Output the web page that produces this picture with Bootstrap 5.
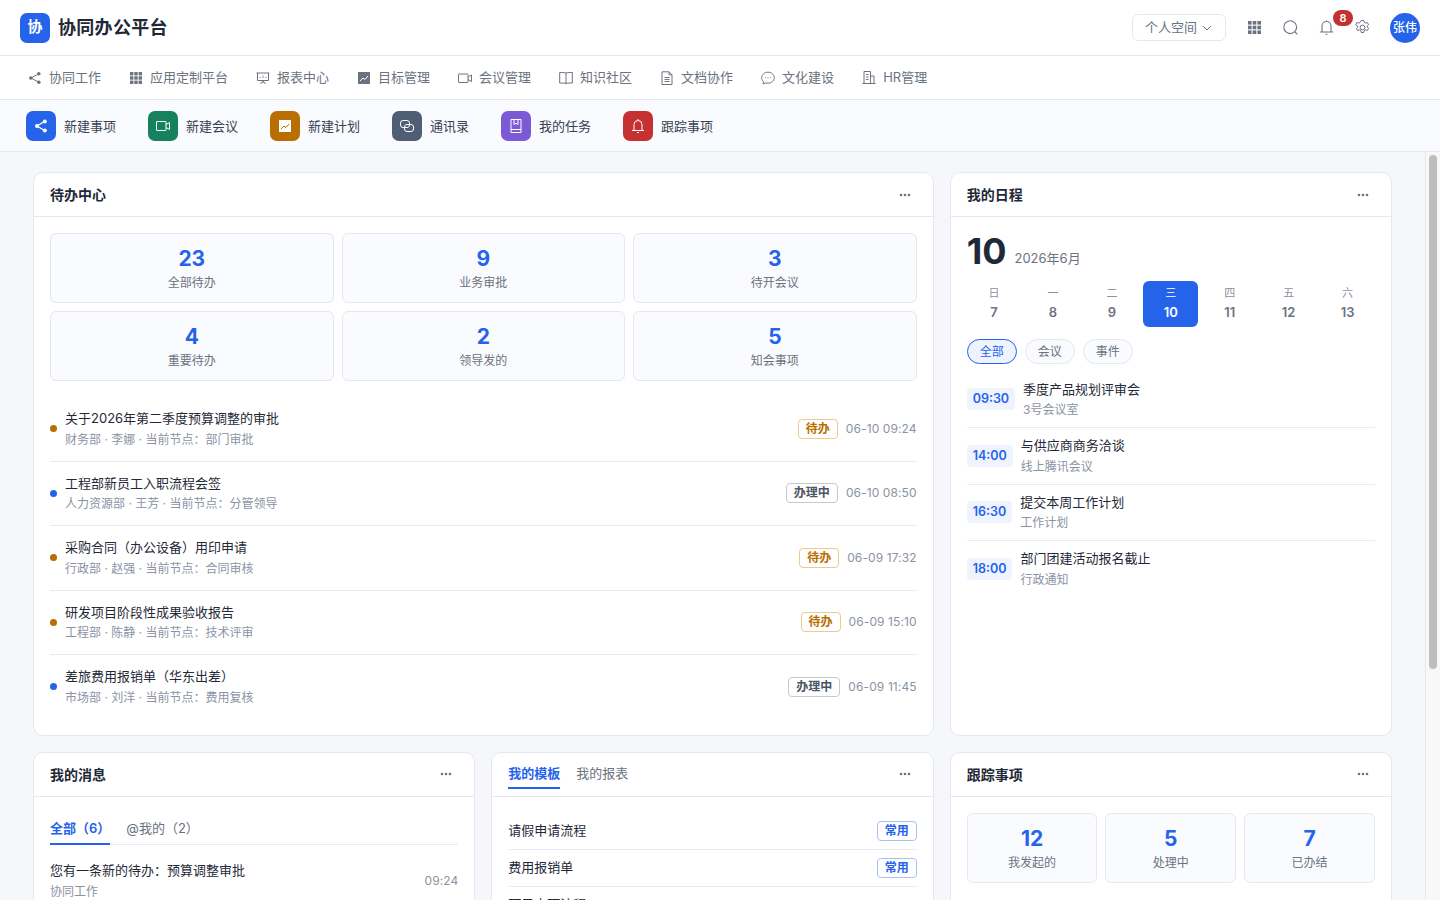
<!DOCTYPE html>
<html lang="zh-CN">
<head>
  <meta charset="UTF-8" />
  <meta name="viewport" content="width=device-width, initial-scale=1.0" />
  <title>协同办公平台</title>
  <link href="https://cdn.jsdelivr.net/npm/bootstrap@5.3.0/dist/css/bootstrap.min.css" rel="stylesheet" />
  <style>
    html, body { height: 100%; }
    body { font-family: Inter, "Noto Sans CJK SC", sans-serif; font-size: 13px; color: #1f2937; background: #f5f7fb; overflow: hidden; }
    .app-shell { height: 900px; display: flex; flex-direction: column; }
    .top-bar { height: 56px; flex: none; background: #fff; border-bottom: 1px solid #e5e8f0; padding: 0 20px; }
    .brand-logo { width: 30px; height: 30px; border-radius: 7px; background: #2563eb; color: #fff; font-size: 15px; font-weight: 700; }
    .brand-name { font-size: 18px; font-weight: 600; letter-spacing: .3px; color: #1f2937; margin-left: 8px; }
    .space-btn { width: 94px; height: 27px; padding-left: 12px; gap: 5px; border: 1px solid #e5e8f0; border-radius: 6px; color: #6b7280; background: #fff; font-size: 13px; margin-right: 21px; }
    .tool-icon { width: 15px; height: 15px; color: #6b7280; }
    .tools-row { gap: 21px; }
    .bell-wrap { position: relative; width: 15px; height: 15px; }
    .bell-count { position: absolute; left: 14px; top: -10px; width: 20px; height: 16px; border-radius: 8px; background: #c53030; color: #fff; font-size: 11px; font-weight: 600; line-height: 16px; text-align: center; }
    .gear-icon { margin-left: 21px; }
    .user-avatar { width: 30px; height: 30px; border-radius: 50%; background: #2563eb; color: #fff; font-size: 12px; font-weight: 500; margin-left: 20px; }
    .module-bar { height: 44px; flex: none; background: #fff; border-bottom: 1px solid #e5e8f0; padding-left: 14px; }
    .module-link { padding: 0 14px; color: #6b7280; display: flex; align-items: center; gap: 7px; text-decoration: none; }
    .module-link svg { width: 14px; height: 14px; flex: none; }
    .quick-bar { height: 52px; flex: none; background: #fafbfe; border-bottom: 1px solid #e5e8f0; padding-left: 26px; gap: 32px; }
    .quick-item { gap: 8px; color: #374151; }
    .quick-text { margin-top: 2px; }
    .quick-icon { width: 30px; height: 30px; border-radius: 7px; color: #fff; }
    .quick-icon svg { width: 16px; height: 16px; }
    .tone-blue { background: #2563eb; }
    .tone-green { background: #16825d; }
    .tone-amber { background: #b86e00; }
    .tone-slate { background: #4f5d75; }
    .tone-purple { background: #7c5ad6; }
    .tone-red { background: #c53030; }
    .work-area { flex: 1; min-height: 0; }
    .content-scroll { flex: 1; min-width: 0; overflow-y: auto; scrollbar-width: none; padding: 20px 33px; }
    .scroll-rail { width: 15px; flex: none; background: #f8f8f8; border-left: 1px solid #e8e8e8; padding: 3px 3px 0; }
    .scroll-thumb { height: 514px; border-radius: 4px; background: #bdbdbd; }
    .board-grid { display: grid; grid-template-columns: repeat(3, minmax(0, 1fr)); gap: 16px; }
    .span-two { grid-column: span 2; }
    .panel-card { border: 1px solid #e5e8f0; border-radius: 10px; background: #fff; }
    .panel-head { height: 44px; padding: 0 16px; border-bottom: 1px solid #e5e8f0; }
    .panel-title { font-size: 14px; font-weight: 600; color: #1f2937; }
    .more-dots { width: 24px; height: 24px; color: #6b7280; }
    .panel-body { padding: 16px; }
    .stat-grid { display: grid; gap: 8px; }
    .stat-three { grid-template-columns: repeat(3, minmax(0, 1fr)); }
    .stat-box { height: 70px; border: 1px solid #e5e8f0; border-radius: 6px; background: #fafbfe; padding-top: 12px; text-align: center; }
    .stat-num { font-size: 21px; font-weight: 700; line-height: 26px; color: #2563eb; }
    .stat-label { font-size: 12px; line-height: 18px; margin-top: 2px; color: #6b7280; }
    .todo-list { margin-top: 16px; }
    .todo-row { padding: 12px 0; gap: 8px; border-bottom: 1px solid #e8ebf2; }
    .todo-row:last-child { border-bottom: 0; }
    .todo-dot { width: 7px; height: 7px; border-radius: 50%; flex: none; }
    .row-title { font-size: 13px; line-height: 19.5px; color: #1f2937; }
    .row-sub { font-size: 12px; line-height: 18px; margin-top: 2px; color: #8b93a3; }
    .state-tag { height: 20px; padding: 0 7px; font-size: 12px; font-weight: 600; line-height: 18px; border: 1px solid; border-radius: 4px; background: #fff; white-space: nowrap; }
    .state-wait { color: #b86e00; border-color: #f0c98c; }
    .state-doing { color: #4b5563; border-color: #c5c9d2; }
    .state-common { color: #2563eb; border-color: #a9c1f7; }
    .row-time { font-size: 12px; letter-spacing: .1px; color: #8b93a3; white-space: nowrap; }
    .date-line { height: 36px; }
    .date-big { font-size: 36px; font-weight: 700; line-height: 36px; color: #1f2937; }
    .date-month { color: #6b7280; margin-left: 8px; margin-bottom: 3px; line-height: 16px; }
    .week-strip { display: grid; grid-template-columns: repeat(7, minmax(0, 1fr)); gap: 4px; margin-top: 12px; }
    .week-cell { height: 46px; padding-top: 4px; border-radius: 6px; text-align: center; }
    .week-name { font-size: 11px; line-height: 16.5px; color: #8b93a3; }
    .week-day { font-size: 13px; line-height: 19.5px; margin-top: 1px; font-weight: 600; color: #6b7280; }
    .week-today { background: #2563eb; }
    .week-today .week-name, .week-today .week-day { color: #fff; }
    .chip-row { gap: 8px; margin-top: 12px; margin-bottom: 7.5px; }
    .filter-chip { width: 50px; height: 25px; border: 1px solid #e5e8f0; border-radius: 13px; background: #fafbfe; color: #6b7280; font-size: 12px; line-height: 23px; text-align: center; }
    .chip-on { border-color: #2563eb; background: #eef3fe; color: #2563eb; }
    .sched-row { padding: 8px 0; gap: 8px; border-bottom: 1px solid #e8ebf2; }
    .sched-row:last-child { border-bottom: 0; }
    .time-tag { padding: 0 6px; height: 22px; line-height: 22px; border-radius: 4px; background: #eef3fe; color: #2563eb; font-size: 12.5px; font-weight: 600; }
    .tab-strip { gap: 16px; border-bottom: 1px solid #e8ebf2; }
    .tab-item { padding: 6px 0 5px; color: #6b7280; }
    .tab-on { color: #2563eb; font-weight: 600; border-bottom: 2px solid #2563eb; margin-bottom: -1px; }
    .msg-row { padding: 16px 0 8px; }
    .head-tabs { gap: 16px; height: 44px; }
    .head-tab { height: 37px; line-height: 42px; color: #6b7280; }
    .head-tab-on { color: #2563eb; font-weight: 600; border-bottom: 2px solid #2563eb; }
    .tpl-row { padding: 8px 0; border-bottom: 1px solid #e8ebf2; }
    .tpl-row:last-child { border-bottom: 0; }
    .lower-card { height: 468px; }
  </style>
</head>
<body>
  <div class="app-shell">
    <!-- top bar -->
    <header class="top-bar d-flex align-items-center justify-content-between">
      <div class="d-flex align-items-center">
        <div class="brand-logo d-flex align-items-center justify-content-center">协</div>
        <div class="brand-name">协同办公平台</div>
      </div>
      <div class="d-flex align-items-center">
        <div class="space-btn d-flex align-items-center">个人空间
          <svg width="10" height="10" viewBox="0 0 10 10" fill="none" stroke="currentColor"><path d="M1 3l4 4 4-4"/></svg>
        </div>
        <div class="d-flex align-items-center tools-row">
          <svg class="tool-icon" viewBox="0 0 15 15" fill="currentColor"><rect x="1" y="1" width="3.6" height="3.6"/><rect x="5.7" y="1" width="3.6" height="3.6"/><rect x="10.4" y="1" width="3.6" height="3.6"/><rect x="1" y="5.7" width="3.6" height="3.6"/><rect x="5.7" y="5.7" width="3.6" height="3.6"/><rect x="10.4" y="5.7" width="3.6" height="3.6"/><rect x="1" y="10.4" width="3.6" height="3.6"/><rect x="5.7" y="10.4" width="3.6" height="3.6"/><rect x="10.4" y="10.4" width="3.6" height="3.6"/></svg>
          <svg class="tool-icon" viewBox="0 0 15 15" fill="none" stroke="currentColor" stroke-width="1.1"><circle cx="7.2" cy="7.2" r="6.4"/><path d="M12 12l2.4 2.4"/></svg>
          <div class="bell-wrap">
            <svg class="tool-icon d-block" viewBox="0 0 15 15" fill="none" stroke="currentColor" stroke-width="1.1"><path d="M3 11.800V6a4.500 4.500 0 0 1 9 0v5.800M.8 12h13.400M6.500 14.300h2M7.500 .5v1"/></svg>
            <span class="bell-count">8</span>
          </div>
        </div>
        <svg class="tool-icon gear-icon" viewBox="0.5 0.5 15 15" fill="none" stroke="currentColor" stroke-width="1"><circle cx="8" cy="8" r="2.400"/><path d="M6.700 1h2.600l.4 1.900 1.300.7 1.800-.6 1.300 2.200-1.400 1.300v1l1.400 1.300-1.300 2.200-1.800-.6-1.300.7-.4 1.900H6.700l-.4-1.900-1.300-.7-1.800.6-1.300-2.200 1.400-1.300v-1L1.100 5.200l1.300-2.200 1.800.6 1.300-.7z" stroke-linejoin="round"/></svg>
        <div class="user-avatar d-flex align-items-center justify-content-center">张伟</div>
      </div>
    </header>

    <!-- modules -->
    <nav class="module-bar d-flex align-items-stretch">
      <a class="module-link" href="#"><svg viewBox="0 0 14 14" fill="currentColor" stroke="currentColor"><path d="M10.500 3L3 7l7.500 4" fill="none"/><circle cx="10.800" cy="2.800" r="1.800" stroke="none"/><circle cx="2.800" cy="7" r="1.800" stroke="none"/><circle cx="10.800" cy="11.200" r="1.800" stroke="none"/></svg>协同工作</a>
      <a class="module-link" href="#"><svg viewBox="0 0 14 14" fill="currentColor"><rect x="1" y="1" width="3.400" height="3.400"/><rect x="5.300" y="1" width="3.400" height="3.400"/><rect x="9.600" y="1" width="3.400" height="3.400"/><rect x="1" y="5.300" width="3.400" height="3.400"/><rect x="5.300" y="5.300" width="3.400" height="3.400"/><rect x="9.600" y="5.300" width="3.400" height="3.400"/><rect x="1" y="9.600" width="3.400" height="3.400"/><rect x="5.300" y="9.600" width="3.400" height="3.400"/><rect x="9.600" y="9.600" width="3.400" height="3.400"/></svg>应用定制平台</a>
      <a class="module-link" href="#"><svg viewBox="0 0 14 14" fill="none" stroke="currentColor"><path d="M.5 2h13M1.500 2v7.500h11V2M7 9.500v1.500M4.500 13L6 11h2l1.500 2"/><path d="M4 7V6M7 7V4.500M10 7V5.500" stroke-dasharray="1 .5"/></svg>报表中心</a>
      <a class="module-link" href="#"><svg viewBox="0 0 14 14"><rect x="1" y="1" width="12" height="12" fill="currentColor"/><path d="M3 10l3-3 2 1.500L11 5" fill="none" stroke="#fff"/></svg>目标管理</a>
      <a class="module-link" href="#"><svg viewBox="0 0 14 14" fill="none" stroke="currentColor"><rect x=".5" y="3" width="9.500" height="8.500" rx=".5"/><path d="M10 6l3.500-2v6.500L10 8.500"/></svg>会议管理</a>
      <a class="module-link" href="#"><svg viewBox="0 0 14 14" fill="none" stroke="currentColor"><path d="M7 2v10.500M7 2C6 1.500 2 1.500 .7 1.500v10.500C2 12 6 12 7 12.500c1-.5 5-.5 6.300-.5V1.500C12 1.500 8 1.500 7 2z"/></svg>知识社区</a>
      <a class="module-link" href="#"><svg viewBox="0 0 14 14" fill="none" stroke="currentColor"><path d="M2 .8h7l3 3v9.700H2zM9 .8v3h3M4.500 6.500h5M4.500 8.500h5M4.500 10.500h5"/></svg>文档协作</a>
      <a class="module-link" href="#"><svg viewBox="0 0 14 14" fill="none" stroke="currentColor"><path d="M7 1.200c3.400 0 6.300 2.400 6.300 5.500S10.400 12.200 7 12.200c-.8 0-1.500-.1-2.200-.3L2 13l.4-2.500C1.300 9.500.7 8.200.7 6.700.7 3.600 3.600 1.200 7 1.200z"/><path d="M4.300 6.700h.8M6.600 6.700h.8M8.900 6.700h.8"/></svg>文化建设</a>
      <a class="module-link" href="#"><svg viewBox="0 0 14 14" fill="none" stroke="currentColor"><path d="M.5 12.500h13M2 12.500V.5h6.500v12M8.500 5H12v7.500M4 3.500h2.500M4 6h2.500M4 8.500h2.500"/></svg>HR管理</a>
    </nav>

    <!-- quick actions -->
    <div class="quick-bar d-flex align-items-center">
      <div class="quick-item d-flex align-items-center"><span class="quick-icon tone-blue d-flex align-items-center justify-content-center"><svg viewBox="0 0 16 16" fill="currentColor" stroke="currentColor"><path d="M11.500 3.500L4 8l7.500 4.500" fill="none" stroke-width="1.300"/><circle cx="11.800" cy="3.600" r="2" stroke="none"/><circle cx="4" cy="8" r="2" stroke="none"/><circle cx="11.800" cy="12.400" r="2" stroke="none"/></svg></span><span class="quick-text">新建事项</span></div>
      <div class="quick-item d-flex align-items-center"><span class="quick-icon tone-green d-flex align-items-center justify-content-center"><svg viewBox="0 0 16 16" fill="none" stroke="currentColor"><rect x="1.500" y="3.500" width="9.500" height="9" rx=".5"/><path d="M11 6.500L14.500 4.500v7L11 9.500"/></svg></span><span class="quick-text">新建会议</span></div>
      <div class="quick-item d-flex align-items-center"><span class="quick-icon tone-amber d-flex align-items-center justify-content-center"><svg viewBox="0 0 16 16"><rect x="2" y="2" width="12" height="12" fill="currentColor"/><path d="M4 11l3-3 2 1.500L12 6" fill="none" stroke="#b86e00"/></svg></span><span class="quick-text">新建计划</span></div>
      <div class="quick-item d-flex align-items-center"><span class="quick-icon tone-slate d-flex align-items-center justify-content-center"><svg viewBox="0 0 16 16" fill="none" stroke="currentColor"><rect x="1.500" y="2.500" width="9" height="7" rx="2.500"/><rect x="5.500" y="6.500" width="9" height="7" rx="2.500"/></svg></span><span class="quick-text">通讯录</span></div>
      <div class="quick-item d-flex align-items-center"><span class="quick-icon tone-purple d-flex align-items-center justify-content-center"><svg viewBox="0 0 16 16" fill="none" stroke="currentColor"><path d="M3 1.500h10v13H3zM3 11.500h10M6 1.500v5l2-1.200 2 1.200v-5"/></svg></span><span class="quick-text">我的任务</span></div>
      <div class="quick-item d-flex align-items-center"><span class="quick-icon tone-red d-flex align-items-center justify-content-center"><svg viewBox="0 0 16 16" fill="none" stroke="currentColor"><path d="M4 12.500V6.500a4 4 0 0 1 8 0v6M2 12.500h12M7 14.500h2M8 1v1.500"/></svg></span><span class="quick-text">跟踪事项</span></div>
    </div>

    <div class="work-area d-flex">
    <main class="content-scroll">
      <div class="board-grid">
        <!-- todo -->
        <section class="panel-card span-two">
          <div class="panel-head d-flex align-items-center justify-content-between">
            <span class="panel-title">待办中心</span>
            <span class="more-dots d-flex align-items-center justify-content-center"><svg width="12" height="4" viewBox="0 0 12 4" fill="currentColor"><circle cx="2" cy="2" r="1.300"/><circle cx="6" cy="2" r="1.300"/><circle cx="10" cy="2" r="1.300"/></svg></span>
          </div>
          <div class="panel-body">
            <div class="stat-grid stat-three">
              <div class="stat-box"><div class="stat-num">23</div><div class="stat-label">全部待办</div></div>
              <div class="stat-box"><div class="stat-num">9</div><div class="stat-label">业务审批</div></div>
              <div class="stat-box"><div class="stat-num">3</div><div class="stat-label">待开会议</div></div>
              <div class="stat-box"><div class="stat-num">4</div><div class="stat-label">重要待办</div></div>
              <div class="stat-box"><div class="stat-num">2</div><div class="stat-label">领导发的</div></div>
              <div class="stat-box"><div class="stat-num">5</div><div class="stat-label">知会事项</div></div>
            </div>
            <div class="todo-list">
              <div class="todo-row d-flex align-items-center">
                <span class="todo-dot tone-amber"></span>
                <div class="flex-grow-1"><div class="row-title">关于2026年第二季度预算调整的审批</div><div class="row-sub">财务部 · 李娜 · 当前节点：部门审批</div></div>
                <span class="state-tag state-wait">待办</span><span class="row-time">06-10 09:24</span>
              </div>
              <div class="todo-row d-flex align-items-center">
                <span class="todo-dot tone-blue"></span>
                <div class="flex-grow-1"><div class="row-title">工程部新员工入职流程会签</div><div class="row-sub">人力资源部 · 王芳 · 当前节点：分管领导</div></div>
                <span class="state-tag state-doing">办理中</span><span class="row-time">06-10 08:50</span>
              </div>
              <div class="todo-row d-flex align-items-center">
                <span class="todo-dot tone-amber"></span>
                <div class="flex-grow-1"><div class="row-title">采购合同（办公设备）用印申请</div><div class="row-sub">行政部 · 赵强 · 当前节点：合同审核</div></div>
                <span class="state-tag state-wait">待办</span><span class="row-time">06-09 17:32</span>
              </div>
              <div class="todo-row d-flex align-items-center">
                <span class="todo-dot tone-amber"></span>
                <div class="flex-grow-1"><div class="row-title">研发项目阶段性成果验收报告</div><div class="row-sub">工程部 · 陈静 · 当前节点：技术评审</div></div>
                <span class="state-tag state-wait">待办</span><span class="row-time">06-09 15:10</span>
              </div>
              <div class="todo-row d-flex align-items-center">
                <span class="todo-dot tone-blue"></span>
                <div class="flex-grow-1"><div class="row-title">差旅费用报销单（华东出差）</div><div class="row-sub">市场部 · 刘洋 · 当前节点：费用复核</div></div>
                <span class="state-tag state-doing">办理中</span><span class="row-time">06-09 11:45</span>
              </div>
            </div>
          </div>
        </section>

        <!-- schedule -->
        <section class="panel-card">
          <div class="panel-head d-flex align-items-center justify-content-between">
            <span class="panel-title">我的日程</span>
            <span class="more-dots d-flex align-items-center justify-content-center"><svg width="12" height="4" viewBox="0 0 12 4" fill="currentColor"><circle cx="2" cy="2" r="1.300"/><circle cx="6" cy="2" r="1.300"/><circle cx="10" cy="2" r="1.300"/></svg></span>
          </div>
          <div class="panel-body">
            <div class="date-line d-flex align-items-end"><span class="date-big">10</span><span class="date-month">2026年6月</span></div>
            <div class="week-strip">
              <div class="week-cell"><div class="week-name">日</div><div class="week-day">7</div></div>
              <div class="week-cell"><div class="week-name">一</div><div class="week-day">8</div></div>
              <div class="week-cell"><div class="week-name">二</div><div class="week-day">9</div></div>
              <div class="week-cell week-today"><div class="week-name">三</div><div class="week-day">10</div></div>
              <div class="week-cell"><div class="week-name">四</div><div class="week-day">11</div></div>
              <div class="week-cell"><div class="week-name">五</div><div class="week-day">12</div></div>
              <div class="week-cell"><div class="week-name">六</div><div class="week-day">13</div></div>
            </div>
            <div class="chip-row d-flex">
              <span class="filter-chip chip-on">全部</span>
              <span class="filter-chip">会议</span>
              <span class="filter-chip">事件</span>
            </div>
            <div class="sched-row d-flex align-items-center"><span class="time-tag">09:30</span><div><div class="row-title">季度产品规划评审会</div><div class="row-sub">3号会议室</div></div></div>
            <div class="sched-row d-flex align-items-center"><span class="time-tag">14:00</span><div><div class="row-title">与供应商商务洽谈</div><div class="row-sub">线上腾讯会议</div></div></div>
            <div class="sched-row d-flex align-items-center"><span class="time-tag">16:30</span><div><div class="row-title">提交本周工作计划</div><div class="row-sub">工作计划</div></div></div>
            <div class="sched-row d-flex align-items-center"><span class="time-tag">18:00</span><div><div class="row-title">部门团建活动报名截止</div><div class="row-sub">行政通知</div></div></div>
          </div>
        </section>

        <!-- messages -->
        <section class="panel-card lower-card">
          <div class="panel-head d-flex align-items-center justify-content-between">
            <span class="panel-title">我的消息</span>
            <span class="more-dots d-flex align-items-center justify-content-center"><svg width="12" height="4" viewBox="0 0 12 4" fill="currentColor"><circle cx="2" cy="2" r="1.300"/><circle cx="6" cy="2" r="1.300"/><circle cx="10" cy="2" r="1.300"/></svg></span>
          </div>
          <div class="panel-body">
            <div class="tab-strip d-flex">
              <span class="tab-item tab-on">全部（6）</span>
              <span class="tab-item">@我的（2）</span>
            </div>
            <div class="msg-row d-flex align-items-center justify-content-between">
              <div><div class="row-title">您有一条新的待办：预算调整审批</div><div class="row-sub">协同工作</div></div>
              <span class="row-time">09:24</span>
            </div>
          </div>
        </section>

        <!-- templates -->
        <section class="panel-card lower-card">
          <div class="panel-head d-flex align-items-center justify-content-between">
            <div class="head-tabs d-flex">
              <span class="head-tab head-tab-on">我的模板</span>
              <span class="head-tab">我的报表</span>
            </div>
            <span class="more-dots d-flex align-items-center justify-content-center"><svg width="12" height="4" viewBox="0 0 12 4" fill="currentColor"><circle cx="2" cy="2" r="1.300"/><circle cx="6" cy="2" r="1.300"/><circle cx="10" cy="2" r="1.300"/></svg></span>
          </div>
          <div class="panel-body">
            <div class="tpl-row d-flex align-items-center justify-content-between"><span class="row-title">请假申请流程</span><span class="state-tag state-common">常用</span></div>
            <div class="tpl-row d-flex align-items-center justify-content-between"><span class="row-title">费用报销单</span><span class="state-tag state-common">常用</span></div>
            <div class="tpl-row d-flex align-items-center justify-content-between"><span class="row-title">项目立项流程</span></div>
          </div>
        </section>

        <!-- tracking -->
        <section class="panel-card lower-card">
          <div class="panel-head d-flex align-items-center justify-content-between">
            <span class="panel-title">跟踪事项</span>
            <span class="more-dots d-flex align-items-center justify-content-center"><svg width="12" height="4" viewBox="0 0 12 4" fill="currentColor"><circle cx="2" cy="2" r="1.300"/><circle cx="6" cy="2" r="1.300"/><circle cx="10" cy="2" r="1.300"/></svg></span>
          </div>
          <div class="panel-body">
            <div class="stat-grid stat-three">
              <div class="stat-box"><div class="stat-num">12</div><div class="stat-label">我发起的</div></div>
              <div class="stat-box"><div class="stat-num">5</div><div class="stat-label">处理中</div></div>
              <div class="stat-box"><div class="stat-num">7</div><div class="stat-label">已办结</div></div>
            </div>
          </div>
        </section>
      </div>
    </main>
    <div class="scroll-rail"><div class="scroll-thumb"></div></div>
    </div>
  </div>
  <script src="https://cdn.jsdelivr.net/npm/bootstrap@5.3.0/dist/js/bootstrap.bundle.min.js"></script>
</body>
</html>
